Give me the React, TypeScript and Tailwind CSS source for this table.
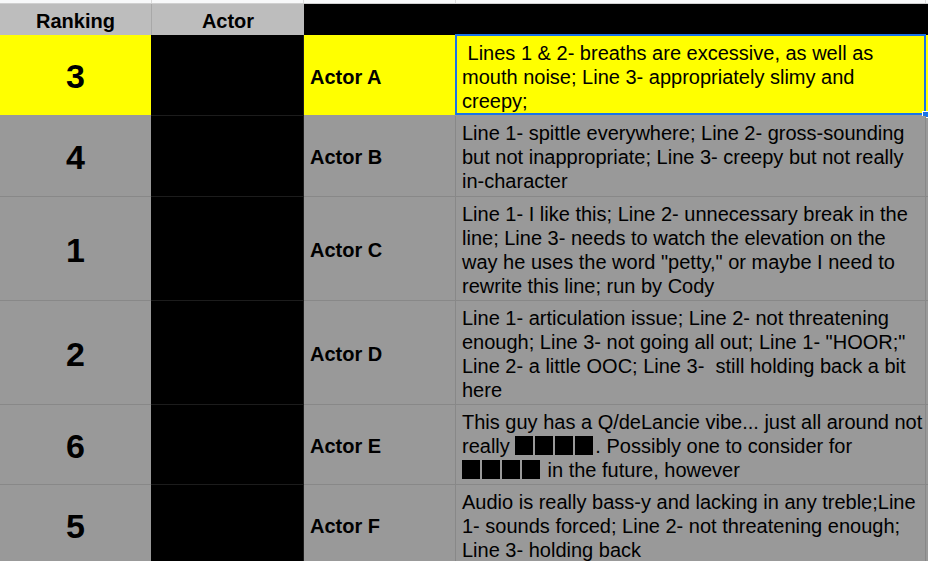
import React from "react";

type Row = {
  rank: string;
  actor: string;
  h: string;
  yellow?: boolean;
  lines: React.ReactNode[];
};

const Block = () => <span className="inline-block w-[18px] h-[19px] bg-black mr-[2px] shrink-0" />;
const Blocks = () => (
  <span className="inline-flex items-center">
    <Block />
    <Block />
    <Block />
    <Block />
  </span>
);

const rows: Row[] = [
  {
    rank: "3",
    actor: "Actor A",
    h: "h-[81px]",
    yellow: true,
    lines: [
      " Lines 1 & 2- breaths are excessive, as well as",
      "mouth noise; Line 3- appropriately slimy and",
      "creepy;",
    ],
  },
  {
    rank: "4",
    actor: "Actor B",
    h: "h-[81px]",
    lines: [
      "Line 1- spittle everywhere; Line 2- gross-sounding",
      "but not inappropriate; Line 3- creepy but not really",
      "in-character",
    ],
  },
  {
    rank: "1",
    actor: "Actor C",
    h: "h-[104px]",
    lines: [
      "Line 1- I like this; Line 2- unnecessary break in the",
      "line; Line 3- needs to watch the elevation on the",
      'way he uses the word "petty," or maybe I need to',
      "rewrite this line; run by Cody",
    ],
  },
  {
    rank: "2",
    actor: "Actor D",
    h: "h-[104px]",
    lines: [
      "Line 1- articulation issue; Line 2- not threatening",
      'enough; Line 3- not going all out; Line 1- "HOOR;"',
      "Line 2- a little OOC; Line 3-  still holding back a bit",
      "here",
    ],
  },
  {
    rank: "6",
    actor: "Actor E",
    h: "h-[80px]",
    lines: [
      "This guy has a Q/deLancie vibe... just all around not",
      <>
        {"really "}
        <Blocks />
        {". Possibly one to consider for"}
      </>,
      <>
        <Blocks />
        {" in the future, however"}
      </>,
    ],
  },
  {
    rank: "5",
    actor: "Actor F",
    h: "h-[80px]",
    lines: [
      "Audio is really bass-y and lacking in any treble;Line",
      "1- sounds forced; Line 2- not threatening enough;",
      "Line 3- holding back",
    ],
  },
];

export default function App() {
  return (
    <div
      className="w-[928px] h-[561px] overflow-hidden bg-[#999999] text-black"
      style={{ fontFamily: '"Liberation Sans", Arial, sans-serif' }}
    >
      {/* top strip */}
      <div className="grid grid-cols-[152px_152px_152px_470px_1fr] h-[4px] bg-[#f8f9fa] border-b border-[#d0d0d0]">
        <div className="border-r border-[#dadada]" />
        <div className="border-r border-[#dadada]" />
        <div className="border-r border-[#dadada]" />
        <div className="border-r border-[#dadada]" />
        <div />
      </div>
      {/* header */}
      <div className="grid grid-cols-[152px_152px_152px_470px_1fr] h-[31px]">
        <div className="bg-[#bdbdbd] border-r border-[#a8a8a8] flex items-center justify-center pt-[2px] text-[20px] font-bold">
          Ranking
        </div>
        <div className="bg-[#bdbdbd] flex items-center justify-center pt-[2px] text-[20px] font-bold">Actor</div>
        <div className="bg-black" />
        <div className="bg-black" />
        <div className="bg-black" />
      </div>
      {rows.map((r, i) => {
        const bg = r.yellow ? "bg-[#ffff00]" : "bg-[#999999]";
        const line = r.yellow ? "border-[#999999]" : "border-[#888888]";
        const pt = r.yellow ? "pt-[4px]" : "pt-[2px]";
        return (
          <div key={i} className={`grid grid-cols-[152px_152px_152px_470px_1fr] ${r.h}`}>
            <div className={`${bg} border-r border-b ${line} flex items-center justify-center pt-[3px] text-[34px] font-bold`}>
              {r.rank}
            </div>
            <div className="bg-black border-r border-b border-[#1c1c1c] -ml-px" />
            <div className={`${bg} border-r border-b ${line} flex items-center pl-[6px] ${pt} text-[20px] font-bold`}>
              {r.actor}
            </div>
            <div className={`${bg} border-r border-b ${line} relative flex flex-col justify-center pl-[6px] ${pt} text-[20px] leading-[24px]`}>
              {r.lines.map((l, j) => (
                <div key={j} className="whitespace-pre flex items-center h-[24px]">
                  {l}
                </div>
              ))}
              {r.yellow && (
                <>
                  <div className="absolute -left-px -top-px right-[-1px] bottom-0 border-2 border-[#1a73e8] pointer-events-none" />
                  <div className="absolute right-[-4px] bottom-[-3px] w-[7px] h-[7px] bg-[#1a73e8] border border-white" />
                </>
              )}
            </div>
            <div className={`${bg} border-b ${line}`} />
          </div>
        );
      })}
    </div>
  );
}
